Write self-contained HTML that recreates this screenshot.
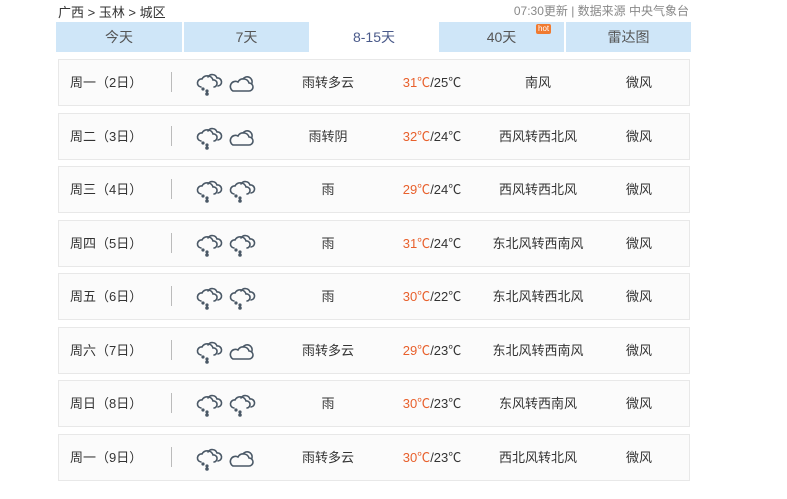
<!DOCTYPE html>
<html><head><meta charset="utf-8"><style>
body{margin:0;width:787px;height:499px;background:#fff;font-family:"Liberation Sans","Noto Sans CJK SC",sans-serif;color:#333;position:relative;overflow:hidden}
.bc{position:absolute;left:58px;top:2px;font-size:13px;color:#333}
.upd{position:absolute;right:98px;top:2px;font-size:12px;color:#888}
.tab{position:absolute;top:22px;height:30px;line-height:30px;text-align:center;font-size:14px;color:#555;background:#cfe6f8}
.tab.act{background:#fff;color:#4a5a8a}
.hot{position:absolute;left:97px;top:2px;background:#f07a30;color:#fff;font-size:8px;line-height:10px;padding:0 2px;border-radius:2px}
.row{position:absolute;left:58px;width:630px;height:45px;border:1px solid #e8e8e8;background:#fbfbfb;font-size:13px}
.c{position:absolute;top:0;line-height:45px;white-space:nowrap;text-align:center}
.sep{position:absolute;left:112px;top:12px;width:1px;height:20px;background:#bbb}
.ic{position:absolute;top:8px}
.r{color:#e8602c}
</style></head><body>
<div class="bc">广西 &gt; 玉林 &gt; 城区</div>
<div class="upd">07:30更新 | 数据来源 中央气象台</div>
<div class="tab" style="left:56px;width:126px">今天</div>
<div class="tab" style="left:184px;width:125px">7天</div>
<div class="tab act" style="left:311px;width:126px">8-15天</div>
<div class="tab" style="left:439px;width:125px">40天<span class="hot">hot</span></div>
<div class="tab" style="left:566px;width:125px">雷达图</div>
<svg width="0" height="0" style="position:absolute"><defs>
<g id="rain" fill="none" stroke="#4a5866" stroke-width="1.6" stroke-linecap="round">
<path d="M13 9a5 5 0 0 1 9 1a4 4 0 0 1 1 8"/>
<path d="M6 19a4 4 0 0 1 1-8a6 6 0 0 1 11 1a3.5 3.5 0 0 1 1 7"/>
<circle cx="8" cy="21" r="0.8" fill="#4a5866"/><circle cx="12" cy="23" r="0.8" fill="#4a5866"/><circle cx="12" cy="26" r="1" fill="#4a5866"/>
</g>
<g id="pc" fill="none" stroke="#4a5866" stroke-width="1.6" stroke-linecap="round">
<path d="M15 11a5 5 0 0 1 9 4"/>
<path d="M5 23h16a4 4 0 0 0 0-8a6 6 0 0 0-11-1a4.5 4.5 0 0 0-5 9z"/>
</g>
</defs></svg>
<script>
var d=[["周一（2日）","p","雨转多云","31","25","南风"],["周二（3日）","p","雨转阴","32","24","西风转西北风"],["周三（4日）","r","雨","29","24","西风转西北风"],["周四（5日）","r","雨","31","24","东北风转西南风"],["周五（6日）","r","雨","30","22","东北风转西北风"],["周六（7日）","p","雨转多云","29","23","东北风转西南风"],["周日（8日）","r","雨","30","23","东风转西南风"],["周一（9日）","p","雨转多云","30","23","西北风转北风"]];
var tops=[59,113,166,220,273,327,380,434],h="";
d.forEach(function(x,i){h+='<div class="row" style="top:'+tops[i]+'px"><div class="c" style="left:11px">'+x[0]+'</div><div class="sep"></div>'+
'<svg class="ic" style="left:136px" width="30" height="30"><use href="#rain"/></svg>'+
'<svg class="ic" style="left:169px" width="30" height="30"><use href="#'+(x[1]=="p"?"pc":"rain")+'"/></svg>'+
'<div class="c" style="left:219px;width:100px">'+x[2]+'</div>'+
'<div class="c" style="left:323px;width:100px"><span class="r">'+x[3]+'℃</span>/'+x[4]+'℃</div>'+
'<div class="c" style="left:419px;width:120px">'+x[5]+'</div>'+
'<div class="c" style="left:550px;width:60px">微风</div></div>';});
document.write(h);
</script>
</body></html>
